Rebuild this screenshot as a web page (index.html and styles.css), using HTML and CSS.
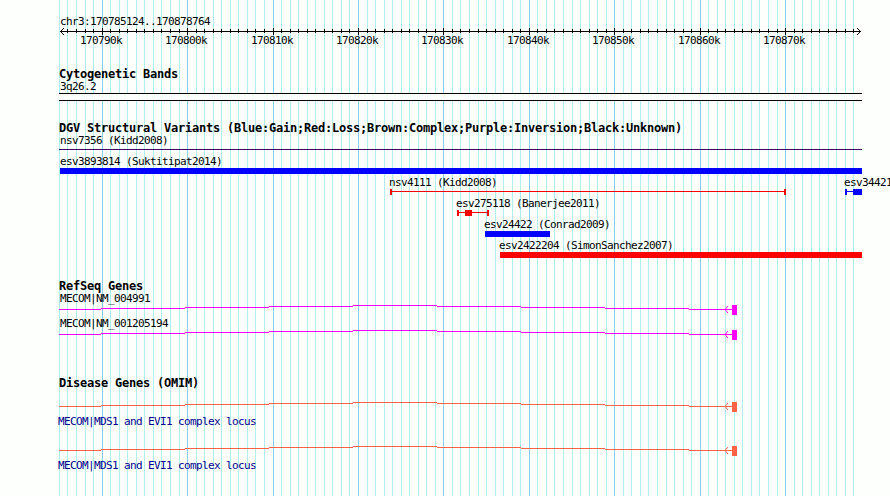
FILE: index.html
```html
<!DOCTYPE html>
<html lang="en">
<head>
    <meta charset="UTF-8">
    <title>chr3:170785124..170878764</title>
    <link rel="stylesheet" href="styles.css">
</head>
<body>
    <div id="browser">
        <svg id="grid" class="grid" width="890" height="496"></svg>

        <svg class="track" width="890" height="67">
            <text x="60" y="25">chr3:170785124..170878764</text>
            <rect x="60" y="31" width="801" height="1"/>
            <path class="arrow" d="M64 28L60.5 31.5L64 35M857 28L860.5 31.5L857 35"/>
            <g id="ticks"></g>
        </svg>

        <h2>Cytogenetic Bands</h2>
        <svg class="track" width="890" height="40">
            <text x="60" y="9">3q26.2</text>
            <rect x="59" y="12" width="803" height="8"/>
            <rect class="band" x="59" y="13" width="803" height="6"/>
        </svg>

        <h2>DGV Structural Variants (Blue:Gain;Red:Loss;Brown:Complex;Purple:Inversion;Black:Unknown)</h2>
        <svg class="track" width="890" height="144">
            <text x="60" y="9">nsv7356 (Kidd2008)</text>
            <rect class="inversion" x="59" y="14" width="803" height="1"/>

            <text x="60" y="30">esv3893814 (Suktitipat2014)</text>
            <rect class="gain" x="60" y="33" width="802" height="6"/>

            <text x="389" y="51">nsv4111 (Kidd2008)</text>
            <g class="loss">
                <rect x="390" y="54" width="2" height="6"/>
                <rect x="390" y="56" width="396" height="1"/>
                <rect x="784" y="54" width="2" height="6"/>
            </g>

            <text x="844" y="51">esv34421</text>
            <g class="gain">
                <rect x="845" y="54" width="2" height="6"/>
                <rect x="845" y="56" width="10" height="1"/>
                <rect x="853" y="54" width="9" height="6"/>
            </g>

            <text x="456" y="72">esv275118 (Banerjee2011)</text>
            <g class="loss">
                <rect x="457" y="75" width="2" height="6"/>
                <rect x="457" y="77" width="32" height="1"/>
                <rect x="465" y="75" width="7" height="6"/>
                <rect x="487" y="75" width="2" height="6"/>
            </g>

            <text x="484" y="93">esv24422 (Conrad2009)</text>
            <rect class="gain" x="485" y="96" width="65" height="6"/>

            <text x="499" y="114">esv2422204 (SimonSanchez2007)</text>
            <rect class="loss" x="500" y="117" width="362" height="6"/>
        </svg>

        <h2>RefSeq Genes</h2>
        <svg class="track" width="890" height="83">
            <defs>
                <g id="gene">
                    <path d="M59 4.5H101M101 3.5H185M185 2.5H269M269 1.5H353M353 .5H437M437 1.5H521M521 2.5H605M605 3.5H689M689 4.5H732"/>
                    <path class="head" d="M728 1L725 4.5L728 8"/>
                    <rect x="732" y="0" width="5" height="10"/>
                </g>
            </defs>
            <text x="60" y="9">MECOM|NM_004991</text>
            <use class="refseq" href="#gene" y="12"/>
            <text x="60" y="34">MECOM|NM_001205194</text>
            <use class="refseq" href="#gene" y="37"/>
        </svg>

        <h2>Disease Genes (OMIM)</h2>
        <svg class="track" width="890" height="106">
            <use class="omim" href="#gene" y="12"/>
            <text class="link" x="58" y="35">MECOM|MDS1 and EVI1 complex locus</text>
            <use class="omim" href="#gene" y="56"/>
            <text class="link" x="58" y="79">MECOM|MDS1 and EVI1 complex locus</text>
        </svg>
    </div>
    <script>
        const start = 170785124;
        const end = 170878764;
        const left = 60;
        const width = 800;

        let grid = '';
        let ticks = '';
        for (let k = 170785; k <= 170878; k++) {
            const x = Math.round(left + (k * 1000 - start) / (end - start) * width);
            const major = k % 10 === 0;
            grid += `<rect class="${major ? 'major' : 'minor'}" x="${x}" y="0" width="1" height="496"/>`;
            if (major) {
                ticks += `<rect x="${x}" y="28" width="1" height="7"/>`;
                ticks += `<text x="${x - 22}" y="44">${k}k</text>`;
            } else if (x > left) {
                ticks += `<rect x="${x}" y="29" width="1" height="4"/>`;
            }
        }
        document.getElementById('grid').innerHTML = grid;
        document.getElementById('ticks').innerHTML = ticks;
    </script>
</body>
</html>
```
FILE: styles.css
```css
body {
    margin: 0;
    background-color: #fdfffc;
    color: #000;
    overflow: hidden;
}

#browser {
    position: relative;
    width: 890px;
    height: 496px;
    overflow: hidden;
}

.grid {
    position: absolute;
    top: 0;
    left: 0;
    z-index: -1;
}

.minor {
    fill: #afeeee;
}

.major {
    fill: #87ceeb;
}

h2 {
    margin: 0;
    padding-left: 59px;
    font: bold 12px/14px 'DejaVu Sans Mono', monospace;
    letter-spacing: -0.224px;
    white-space: pre;
}

.track {
    display: block;
    shape-rendering: crispEdges;
}

.track text {
    font: 11px 'DejaVu Sans Mono', monospace;
    letter-spacing: -0.622px;
    white-space: pre;
}

.arrow {
    fill: none;
    stroke: #000;
    shape-rendering: geometricPrecision;
}

.band {
    fill: #fdfffc;
}

.gain {
    fill: #00f;
}

.loss {
    fill: #f00;
}

.inversion {
    fill: #3c0a64;
}

.refseq {
    fill: #f0f;
    color: #f0f;
}

.omim {
    fill: #ff6347;
    color: #ff6347;
}

#gene path {
    fill: none;
    stroke: currentColor;
}

#gene .head {
    shape-rendering: geometricPrecision;
}

.track .link {
    fill: #00008b;
}
```
